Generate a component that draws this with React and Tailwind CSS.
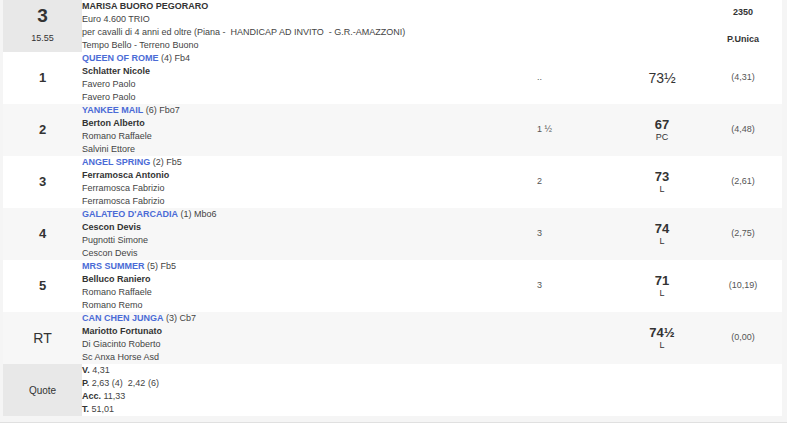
import React from 'react';

const runners = [
  { pos: '1', name: 'QUEEN OF ROME', extra: '(4) Fb4', jockey: 'Schlatter Nicole', trainer: 'Favero Paolo', owner: 'Favero Paolo', dist: '..', weight: '73½', bold: false, tag: '', odds: '(4,31)' },
  { pos: '2', name: 'YANKEE MAIL', extra: '(6) Fbo7', jockey: 'Berton Alberto', trainer: 'Romano Raffaele', owner: 'Salvini Ettore', dist: '1 ½', weight: '67', bold: true, tag: 'PC', odds: '(4,48)' },
  { pos: '3', name: 'ANGEL SPRING', extra: '(2) Fb5', jockey: 'Ferramosca Antonio', trainer: 'Ferramosca Fabrizio', owner: 'Ferramosca Fabrizio', dist: '2', weight: '73', bold: true, tag: 'L', odds: '(2,61)' },
  { pos: '4', name: "GALATEO D'ARCADIA", extra: '(1) Mbo6', jockey: 'Cescon Devis', trainer: 'Pugnotti Simone', owner: 'Cescon Devis', dist: '3', weight: '74', bold: true, tag: 'L', odds: '(2,75)' },
  { pos: '5', name: 'MRS SUMMER', extra: '(5) Fb5', jockey: 'Belluco Raniero', trainer: 'Romano Raffaele', owner: 'Romano Remo', dist: '3', weight: '71', bold: true, tag: 'L', odds: '(10,19)' },
  { pos: 'RT', name: 'CAN CHEN JUNGA', extra: '(3) Cb7', jockey: 'Mariotto Fortunato', trainer: 'Di Giacinto Roberto', owner: 'Sc Anxa Horse Asd', dist: '', weight: '74½', bold: true, tag: 'L', odds: '(0,00)' },
];

const RunnerRow = ({ r, i }) => (
  <div className={`flex h-[52px] ${i % 2 === 1 ? 'bg-[#f7f7f7]' : 'bg-white'}`}>
    <div className="w-[79px] flex items-center justify-center">
      <span className={r.pos === 'RT' ? 'text-[14px] text-[#333]' : 'text-[13px] font-bold text-[#333]'}>{r.pos}</span>
    </div>
    <div className="flex-1 flex flex-col leading-[13px] text-[9px] text-[#444]">
      <div>
        <span className="text-[#4b6bd6] font-bold">{r.name}</span> <span>{r.extra}</span>
      </div>
      <div className="font-bold text-[#333]">{r.jockey}</div>
      <div>{r.trainer}</div>
      <div>{r.owner}</div>
    </div>
    <div className="w-[83px] flex items-center text-[9px] text-[#555]">{r.dist}</div>
    <div className="w-[84px] flex flex-col items-center justify-center text-[#333]">
      <span className={r.bold ? 'text-[13px] leading-[15px] font-bold' : 'text-[14px] leading-[16px]'}>{r.weight}</span>
      {r.tag && <span className="text-[9px] leading-[11px]">{r.tag}</span>}
    </div>
    <div className="w-[78px] flex items-center justify-center text-[9px] text-[#555]">{r.odds}</div>
  </div>
);

export default function App() {
  return (
    <div className="w-[787px] h-[433px] bg-white" style={{ fontFamily: '"Liberation Sans", Arial, sans-serif' }}>
      <div className="bg-[#f5f5f5] pl-[3px] pr-[5px] pb-[6px] border-b border-[#e0e0e0]">
        {/* header */}
        <div className="flex h-[52px] bg-white">
          <div className="w-[79px] bg-[#e8e8e8] flex flex-col items-center justify-center gap-[6px]">
            <span className="text-[19px] font-bold leading-[20px] text-[#333]">3</span>
            <span className="text-[9px] text-[#333]">15.55</span>
          </div>
          <div className="flex-1 flex flex-col leading-[13px] text-[9px] text-[#444]">
            <div className="font-bold text-[#333]">MARISA BUORO PEGORARO</div>
            <div>Euro 4.600 TRIO</div>
            <div>per cavalli di 4 anni ed oltre (Piana -&nbsp; HANDICAP AD INVITO&nbsp; - G.R.-AMAZZONI)</div>
            <div>Tempo Bello - Terreno Buono</div>
          </div>
          <div className="w-[78px] flex flex-col items-center justify-center gap-[13px] text-[9px] font-bold text-[#333]">
            <span>2350</span>
            <span>P.Unica</span>
          </div>
        </div>

        {runners.map((r, i) => (
          <RunnerRow key={r.name} r={r} i={i} />
        ))}

        {/* quote */}
        <div className="flex h-[52px] bg-white">
          <div className="w-[79px] bg-[#e8e8e8] flex items-center justify-center text-[10px] text-[#333]">Quote</div>
          <div className="flex-1 flex flex-col leading-[13px] text-[9px] text-[#444]">
            <div><span className="font-bold text-[#333]">V.</span> 4,31</div>
            <div><span className="font-bold text-[#333]">P.</span> 2,63 (4)&nbsp; 2,42 (6)</div>
            <div><span className="font-bold text-[#333]">Acc.</span> 11,33</div>
            <div><span className="font-bold text-[#333]">T.</span> 51,01</div>
          </div>
        </div>
      </div>
    </div>
  );
}
